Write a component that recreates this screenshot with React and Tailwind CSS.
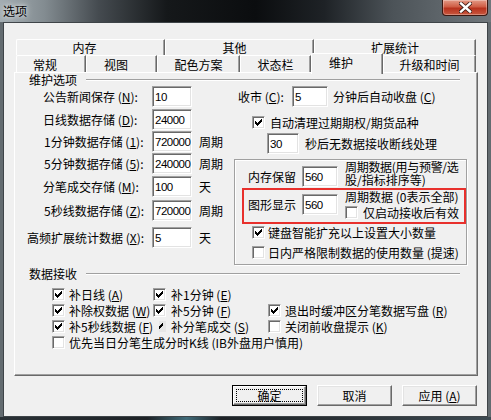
import React from "react";

const sunken =
  "bg-white border border-t-[#a0a0a0] border-l-[#a0a0a0] border-r-white border-b-white shadow-[inset_1px_1px_0_#696969,inset_-1px_-1px_0_#e3e3e3]";

function CheckMark() {
  return (
    <svg width="7" height="7" viewBox="0 0 7 7" shapeRendering="crispEdges">
      <path
        fill="#000"
        d="M6 0h1v1h-1z M5 1h2v1h-2z M0 2h1v1h-1z M4 2h3v1h-3z M0 3h2v1h-2z M3 3h3v1h-3z M0 4h5v1h-5z M1 5h3v1h-3z M2 6h1v1h-1z"
      />
    </svg>
  );
}

function Box({ checked }) {
  return (
    <div className={`${sunken} w-[13px] h-[13px] shrink-0 flex items-center justify-center`}>
      {checked ? <CheckMark /> : null}
    </div>
  );
}

function Input({ value, className }) {
  return (
    <div
      className={`${sunken} ${className} h-[21px] shrink-0 flex items-center pl-[2px] overflow-hidden whitespace-nowrap font-['Liberation_Sans',sans-serif] text-[11.5px] tracking-[-0.5px]`}
    >
      {value}
    </div>
  );
}

function U({ children }) {
  return <span className="underline underline-offset-[1px]">{children}</span>;
}

function Tab({ className, children }) {
  return (
    <div
      className={`${className} shrink-0 bg-[#f0f0f0] border-t border-l border-white border-r border-r-[#696969] shadow-[inset_-1px_0_0_#a0a0a0] rounded-tl-[2px] flex justify-center whitespace-nowrap leading-[12px]`}
    >
      {children}
    </div>
  );
}

function Btn({ children, def }) {
  if (def) {
    return (
      <div className="w-[75px] h-[21px] border border-black">
        <div className="w-full h-full border border-t-white border-l-white border-r-[#696969] border-b-[#696969] shadow-[inset_-1px_-1px_0_#a0a0a0] flex items-center justify-center p-[2px]">
          <div className="w-full h-full border border-dotted border-black flex items-center justify-center">
            {children}
          </div>
        </div>
      </div>
    );
  }
  return (
    <div className="w-[75px] h-[21px] border border-t-white border-l-white border-r-[#696969] border-b-[#696969] shadow-[inset_-1px_-1px_0_#a0a0a0,inset_1px_1px_0_#e3e3e3] flex items-center justify-center">
      {children}
    </div>
  );
}

function LeftRow({ label, value, unit, mt, pl, lw }) {
  return (
    <div className={`flex items-center h-[21px] ${mt} ${pl}`}>
      <div className={`${lw} whitespace-nowrap`}>{label}</div>
      <Input value={value} className="w-[40px]" />
      {unit ? <div className="ml-[7px] whitespace-nowrap">{unit}</div> : null}
    </div>
  );
}

function CB({ checked, children, gap }) {
  return (
    <div className="flex items-center h-[13px] whitespace-nowrap">
      <Box checked={checked} />
      <div className={gap}>{children}</div>
    </div>
  );
}

export default function App() {
  return (
    <div className="relative w-[491px] h-[420px] overflow-hidden bg-[#636b70] font-['Noto_Sans_CJK_SC','Noto_Sans',sans-serif] text-[12px] leading-[12px] text-black">
      {/* title bar */}
      <div className="h-[22px] bg-[linear-gradient(90deg,#a3adb2_0%,#838c91_9%,#454b50_20%,#15181a_34%,#0b0d0f_52%,#1e2226_66%,#4c5358_80%,#70777c_100%)] pl-[3px] pt-[5px]">
        <span className="[text-shadow:0_0_4px_rgba(255,255,255,0.9),0_0_8px_rgba(255,255,255,0.6)]">选项</span>
      </div>
      <div className="absolute right-[3px] top-0 w-[46px] h-[16px] rounded-b-[4px] border border-t-0 border-[#3b1710] bg-[linear-gradient(180deg,#e39a86_0%,#cf5d45_45%,#b7321d_55%,#c9583f_100%)] shadow-[inset_0_0_0_1px_rgba(255,255,255,0.3)] flex items-center justify-center">
        <svg width="13" height="11" viewBox="0 0 13 11">
          <path d="M2 1.5L11 9.5M11 1.5L2 9.5" stroke="#3a1a14" strokeWidth="4" strokeLinecap="square" />
          <path d="M2 1.5L11 9.5M11 1.5L2 9.5" stroke="#fff" strokeWidth="2.4" strokeLinecap="square" />
        </svg>
      </div>

      {/* client */}
      <div className="ml-[3px] w-[485px] h-[395px] bg-[#f0f0f0] border border-[#3e4448] pl-[10px] pt-[16px]">
        {/* tabs */}
        <div className="ml-[2px] flex h-[16px]">
          <Tab className="w-[149px] pr-[12px] pt-[2px]">内存</Tab>
          <Tab className="w-[149px] pr-[10px] pt-[2px]">其他</Tab>
          <Tab className="w-[162px] pt-[2px]">扩展统计</Tab>
        </div>
        <div className="ml-[2px] flex items-end h-[17px] relative z-10">
          <Tab className="w-[70px] h-[17px] pr-[12px] pt-[3px]">常规</Tab>
          <Tab className="w-[71px] h-[17px] pr-[11px] pt-[3px]">视图</Tab>
          <Tab className="w-[83px] h-[17px] pt-[3px]">配色方案</Tab>
          <Tab className="w-[71px] h-[17px] pt-[3px]">状态栏</Tab>
          <Tab className="w-[72px] h-[21px] mb-[-2px] pr-[12px] pt-[3px]">维护</Tab>
          <Tab className="w-[93px] h-[17px] pt-[3px]">升级和时间</Tab>
        </div>

        {/* panel */}
        <div className="w-[464px] h-[304px] border border-t-white border-l-white border-r-[#696969] border-b-[#696969] shadow-[inset_-1px_-1px_0_#a0a0a0]">
          {/* group header */}
          <div className="flex items-center h-[13px] pl-[14px]">
            <span className="whitespace-nowrap">维护选项</span>
            <div className="ml-[9px] mr-[17px] flex-1 h-[2px] border-t border-[#a0a0a0] border-b border-b-white" />
          </div>

          <div className="flex">
            {/* left column */}
            <div className="w-[219px] shrink-0">
              <LeftRow label={<>公告新闻保存 (<U>N</U>):</>} value="10" mt="" pl="pl-[28px]" lw="w-[109px]" />
              <LeftRow label={<>日线数据存储 (<U>D</U>):</>} value="24000" mt="mt-[2px]" pl="pl-[28px]" lw="w-[109px]" />
              <LeftRow label={<>1分钟数据存储 (<U>1</U>):</>} value="720000" unit="周期" mt="mt-[1px]" pl="pl-[29px]" lw="w-[108px]" />
              <LeftRow label={<>5分钟数据存储 (<U>5</U>):</>} value="240000" unit="周期" mt="mt-[1px]" pl="pl-[29px]" lw="w-[108px]" />
              <LeftRow label={<>分笔成交存储 (<U>M</U>):</>} value="100" unit="天" mt="mt-[2px]" pl="pl-[28px]" lw="w-[109px]" />
              <LeftRow label={<>5秒线数据存储 (<U>Z</U>):</>} value="720000" unit="周期" mt="mt-[3px]" pl="pl-[29px]" lw="w-[108px]" />
              <LeftRow label={<>高频扩展统计数据 (<U>X</U>):</>} value="5" unit="天" mt="mt-[6px]" pl="pl-[12px]" lw="w-[125px]" />
            </div>

            {/* right column */}
            <div className="w-[233px] shrink-0">
              <div className="flex items-center h-[21px] pl-[4px]">
                <div className="w-[54px] whitespace-nowrap">收市 (<U>C</U>):</div>
                <Input value="5" className="w-[36px]" />
                <div className="ml-[5px] whitespace-nowrap">分钟后自动收盘 (<U>C</U>)</div>
              </div>
              <div className="mt-[9px] pl-[18px]">
                <CB checked gap="ml-[5px]">自动清理过期期权/期货品种</CB>
              </div>
              <div className="mt-[4px] flex items-center h-[21px] pl-[33px]">
                <Input value="30" className="w-[32px]" />
                <div className="ml-[6px] whitespace-nowrap">秒后无数据接收断线处理</div>
              </div>

              {/* inner box */}
              <div className="mt-[5px] w-[233px] h-[106px] border border-[#a0a0a0] shadow-[1px_1px_0_white,inset_1px_1px_0_white]">
                <div className="flex items-start">
                  <div className="flex items-center mt-[6px] h-[21px] pl-[13px]">
                    <div className="w-[54px] whitespace-nowrap">内存保留</div>
                    <Input value="560" className="w-[36px]" />
                  </div>
                  <div className="ml-[7px] whitespace-nowrap">
                    <div className="h-[13px] leading-[13px] tracking-[-0.3px]">周期数据(用与预警/选</div>
                    <div className="h-[13px] leading-[13px]">股/指标排序等)</div>
                  </div>
                </div>

                <div className="mt-[1px] ml-[7px] w-[224px] h-[36px] border-2 border-[#e8302c] flex items-start">
                  <div className="flex items-center mt-[4px] h-[21px] pl-[4px]">
                    <div className="w-[54px] whitespace-nowrap">图形显示</div>
                    <Input value="560" className="w-[36px]" />
                  </div>
                  <div className="ml-[7px] mt-[1px] whitespace-nowrap">
                    <div className="h-[13px] leading-[12px]">周期数据 (0表示全部)</div>
                    <div className="mt-[2px] flex items-center h-[13px]">
                      <Box />
                      <div className="ml-[5px]">仅启动接收后有效</div>
                    </div>
                  </div>
                </div>

                <div className="mt-[2px] pl-[17px]">
                  <CB checked gap="ml-[3px]">键盘智能扩充以上设置大小数量</CB>
                </div>
                <div className="mt-[7px] pl-[17px]">
                  <CB gap="ml-[3px]">日内严格限制数据的使用数量 (提速)</CB>
                </div>
              </div>
            </div>
          </div>

          {/* data group header */}
          <div className="mt-[2px] flex items-center h-[13px] pl-[14px]">
            <span className="whitespace-nowrap">数据接收</span>
            <div className="ml-[9px] mr-[17px] flex-1 h-[2px] border-t border-[#a0a0a0] border-b border-b-white" />
          </div>

          <div className="mt-[8px] pl-[37px] grid grid-cols-[101px_115px_auto] gap-y-[3px]">
            <CB checked gap="ml-[4px]">补日线 (<U>A</U>)</CB>
            <CB checked gap="ml-[5px]">补1分钟 (<U>E</U>)</CB>
            <div />
            <CB checked gap="ml-[4px]">补除权数据 (<U>W</U>)</CB>
            <CB checked gap="ml-[5px]">补5分钟 (<U>F</U>)</CB>
            <CB checked gap="ml-[4px]">退出时缓冲区分笔数据写盘 (<U>R</U>)</CB>
            <CB checked gap="ml-[4px]">补5秒线数据 (<U>F</U>)</CB>
            <div className="flex items-center h-[13px] whitespace-nowrap">
              <div className="w-[13px] h-[13px] relative shrink-0 overflow-hidden">
                <div className="absolute left-[6px] top-[1px] w-[7px] h-[11px] bg-[#e6e6e6]" />
                <div className="absolute left-[3px] top-[3px]">
                  <CheckMark />
                </div>
                <div className="absolute left-0 top-0 w-[6px] h-[13px] bg-[#f0f0f0]" />
              </div>
              <div className="ml-[5px]">补分笔成交 (<U>S</U>)</div>
            </div>
            <CB gap="ml-[4px]">关闭前收盘提示 (<U>K</U>)</CB>
            <div className="col-span-3">
              <CB gap="ml-[4px]">优先当日分笔生成分时K线 (IB外盘用户慎用)</CB>
            </div>
          </div>
        </div>

        {/* buttons */}
        <div className="mt-[9px] pr-[10px] flex justify-end gap-[10px]">
          <Btn def>确定</Btn>
          <Btn>取消</Btn>
          <Btn>应用 (<U>A</U>)</Btn>
        </div>
      </div>
      <div className="h-[3px] bg-[linear-gradient(90deg,#2a3136_0%,#1d2226_30%,#3f6a78_38%,#1d2226_45%,#2a3136_70%,#3d4a52_100%)]" />
    </div>
  );
}
